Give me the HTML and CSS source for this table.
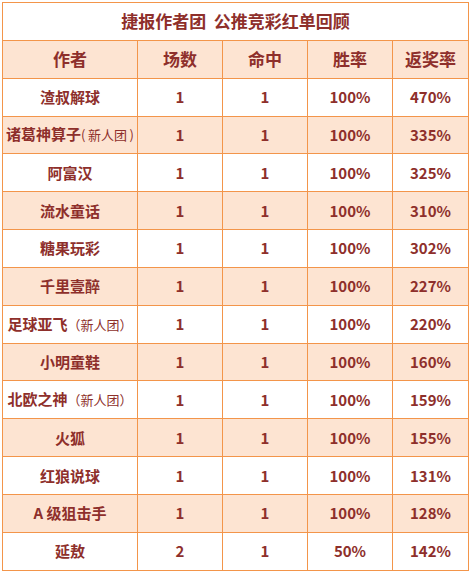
FILE: index.html
```html
<!DOCTYPE html>
<html lang="zh">
<head>
<meta charset="utf-8">
<link rel="stylesheet" href="styles.css">
</head>
<body>
<table class="board">
  <colgroup>
    <col class="c-name"><col class="c-num"><col class="c-num"><col class="c-num"><col class="c-last">
  </colgroup>
  <tr class="title"><td colspan="5">捷报作者团&nbsp; 公推竞彩红单回顾</td></tr>
  <tr class="head"><th>作者</th><th>场数</th><th>命中</th><th>胜率</th><th>返奖率</th></tr>
  <tr><td>渣叔解球</td><td>1</td><td>1</td><td>100%</td><td>470%</td></tr>
  <tr class="alt"><td>诸葛神算子<span class="tag">(&thinsp;新人团&thinsp;)</span></td><td>1</td><td>1</td><td>100%</td><td>335%</td></tr>
  <tr><td>阿富汉</td><td>1</td><td>1</td><td>100%</td><td>325%</td></tr>
  <tr class="alt"><td>流水童话</td><td>1</td><td>1</td><td>100%</td><td>310%</td></tr>
  <tr><td>糖果玩彩</td><td>1</td><td>1</td><td>100%</td><td>302%</td></tr>
  <tr class="alt"><td>千里壹醉</td><td>1</td><td>1</td><td>100%</td><td>227%</td></tr>
  <tr><td>足球亚飞<span class="tag">（新人团）</span></td><td>1</td><td>1</td><td>100%</td><td>220%</td></tr>
  <tr class="alt"><td>小明童鞋</td><td>1</td><td>1</td><td>100%</td><td>160%</td></tr>
  <tr><td>北欧之神<span class="tag">（新人团）</span></td><td>1</td><td>1</td><td>100%</td><td>159%</td></tr>
  <tr class="alt"><td>火狐</td><td>1</td><td>1</td><td>100%</td><td>155%</td></tr>
  <tr><td>红狼说球</td><td>1</td><td>1</td><td>100%</td><td>131%</td></tr>
  <tr class="alt"><td>A 级狙击手</td><td>1</td><td>1</td><td>100%</td><td>128%</td></tr>
  <tr><td>延敖</td><td>2</td><td>1</td><td>50%</td><td>142%</td></tr>
</table>
</body>
</html>
```
FILE: styles.css
```css
html, body {
  margin: 0;
  padding: 0;
  background: #ffffff;
}
body {
  padding: 2px 0 0 2px;
  font-family: "Noto Sans CJK SC", "Microsoft YaHei", sans-serif;
  color: #8e2f2b;
}
.board {
  border-collapse: collapse;
  table-layout: fixed;
  width: 466px;
  border: 1px solid #f3954a;
}
.c-name { width: 135px; }
.c-num { width: 85px; }
.c-last { width: 76px; }
.board td, .board th {
  border: 1px solid #f3954a;
  text-align: center;
  padding: 0;
  height: 36.85px;
  font-size: 15px;
  font-weight: bold;
  white-space: nowrap;
  line-height: 20px;
}
.title td {
  font-size: 17px;
  background: #ffffff;
}
.head th {
  font-size: 17px;
  background: #fde4d2;
}
.alt td {
  background: #fde4d2;
}
.tag {
  font-size: 13px;
  font-weight: normal;
  color: #8e2f2b;
}
```
